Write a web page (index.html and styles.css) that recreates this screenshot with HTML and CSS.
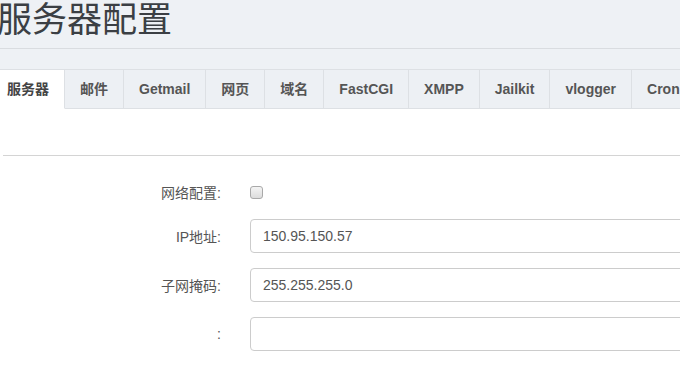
FILE: index.html
```html
<!DOCTYPE html>
<html lang="zh-CN">
<head>
    <meta charset="UTF-8">
    <meta name="viewport" content="width=device-width, initial-scale=1.0">
    <title>服务器配置</title>
    <link rel="stylesheet" href="styles.css">
</head>
<body>
    <div class="page">
        <div class="page-head">
            <h1>服务器配置</h1>
        </div>
        <div class="tab-bar">
            <ul class="tabs">
                <li class="active">服务器</li>
                <li>邮件</li>
                <li>Getmail</li>
                <li>网页</li>
                <li>域名</li>
                <li>FastCGI</li>
                <li>XMPP</li>
                <li>Jailkit</li>
                <li>vlogger</li>
                <li>Cron</li>
                <li>Rescue</li>
            </ul>
        </div>
        <div class="tab-content">
            <hr class="divider">
            <form class="form">
                <div class="form-row short">
                    <label for="net-config">网络配置:</label>
                    <input type="checkbox" id="net-config">
                </div>
                <div class="form-row">
                    <label for="ip">IP地址:</label>
                    <input type="text" id="ip" value="150.95.150.57">
                </div>
                <div class="form-row">
                    <label for="netmask">子网掩码:</label>
                    <input type="text" id="netmask" value="255.255.255.0">
                </div>
                <div class="form-row">
                    <label for="gateway">:</label>
                    <input type="text" id="gateway" value="">
                </div>
            </form>
        </div>
    </div>
</body>
</html>
```

FILE: styles.css
```css
body {
    margin: 0;
    font-family: "Liberation Sans", Arial, "Noto Sans CJK SC", sans-serif;
    background-color: #fff;
    color: #555;
    overflow: hidden;
}

.page {
    margin-left: -8px;
    width: 900px;
}

.page-head {
    background-color: #eef1f5;
    border-bottom: 1px solid #d9dce0;
    height: 48px;
}

h1 {
    margin: 0;
    padding-left: 5px;
    font-size: 35px;
    line-height: 40px;
    font-weight: normal;
    color: #3b3f44;
}

.tab-bar {
    background-color: #eef1f5;
    padding-top: 20px;
}

.tabs {
    display: flex;
    margin: 0;
    padding: 0;
    list-style: none;
    border-top: 1px solid #dde0e4;
}

.tabs li {
    padding: 9px 15px;
    line-height: 20px;
    font-size: 14px;
    font-weight: bold;
    color: #555;
    background-color: #edf0f4;
    border-right: 1px solid #dde0e4;
    border-bottom: 1px solid #dde0e4;
    white-space: nowrap;
}

.tabs li.active {
    background-color: #fff;
    border-bottom-color: #fff;
    color: #444;
}

.tab-content {
    padding-top: 46px;
}

.divider {
    margin: 0 0 0 11px;
    border: none;
    border-top: 1px solid #d4d4d4;
}

.form {
    padding-top: 24px;
}

.form-row {
    display: flex;
    align-items: center;
    height: 34px;
    margin-bottom: 15px;
}

.form-row.short {
    height: 24px;
}

.form-row label {
    width: 229px;
    text-align: right;
    font-size: 14px;
    color: #555;
}

.form-row input[type="text"] {
    margin-left: 29px;
    width: 500px;
    height: 34px;
    box-sizing: border-box;
    padding: 0 12px;
    border: 1px solid #ccc;
    border-radius: 4px;
    font-family: "Liberation Sans", Arial, sans-serif;
    font-size: 14px;
    color: #555;
}

.form-row input[type="checkbox"] {
    appearance: none;
    margin: 0 0 0 29px;
    width: 13px;
    height: 13px;
    border: 1px solid #a9a9a9;
    border-radius: 3px;
    background: linear-gradient(#f4f4f4, #dcdcdc);
}
```
